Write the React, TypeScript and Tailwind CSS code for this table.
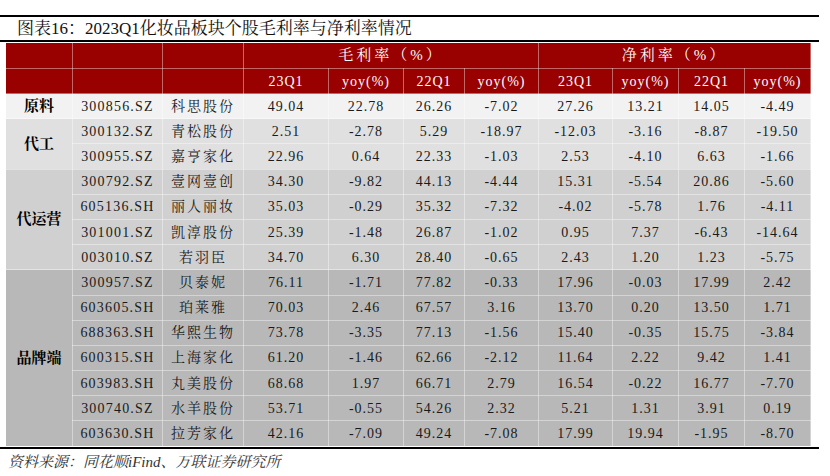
const serif = {
  fontFamily:
    '"Liberation Serif", "Noto Serif CJK SC", "Noto Sans CJK SC", serif',
};

type Row = { code: string; name: string; vals: string[] };

const groups: { label: string; bg: string; rows: Row[] }[] = [
  {
    label: "原料",
    bg: "bg-[#f2f2f2]",
    rows: [
      { code: "300856.SZ", name: "科思股份", vals: ["49.04", "22.78", "26.26", "-7.02", "27.26", "13.21", "14.05", "-4.49"] },
    ],
  },
  {
    label: "代工",
    bg: "bg-[#e0e0e0]",
    rows: [
      { code: "300132.SZ", name: "青松股份", vals: ["2.51", "-2.78", "5.29", "-18.97", "-12.03", "-3.16", "-8.87", "-19.50"] },
      { code: "300955.SZ", name: "嘉亨家化", vals: ["22.96", "0.64", "22.33", "-1.03", "2.53", "-4.10", "6.63", "-1.66"] },
    ],
  },
  {
    label: "代运营",
    bg: "bg-[#d0d0d0]",
    rows: [
      { code: "300792.SZ", name: "壹网壹创", vals: ["34.30", "-9.82", "44.13", "-4.44", "15.31", "-5.54", "20.86", "-5.60"] },
      { code: "605136.SH", name: "丽人丽妆", vals: ["35.03", "-0.29", "35.32", "-7.32", "-4.02", "-5.78", "1.76", "-4.11"] },
      { code: "301001.SZ", name: "凯淳股份", vals: ["25.39", "-1.48", "26.87", "-1.02", "0.95", "7.37", "-6.43", "-14.64"] },
      { code: "003010.SZ", name: "若羽臣", vals: ["34.70", "6.30", "28.40", "-0.65", "2.43", "1.20", "1.23", "-5.75"] },
    ],
  },
  {
    label: "品牌端",
    bg: "bg-[#b8b8b8]",
    rows: [
      { code: "300957.SZ", name: "贝泰妮", vals: ["76.11", "-1.71", "77.82", "-0.33", "17.96", "-0.03", "17.99", "2.42"] },
      { code: "603605.SH", name: "珀莱雅", vals: ["70.03", "2.46", "67.57", "3.16", "13.70", "0.20", "13.50", "1.71"] },
      { code: "688363.SH", name: "华熙生物", vals: ["73.78", "-3.35", "77.13", "-1.56", "15.40", "-0.35", "15.75", "-3.84"] },
      { code: "600315.SH", name: "上海家化", vals: ["61.20", "-1.46", "62.66", "-2.12", "11.64", "2.22", "9.42", "1.41"] },
      { code: "603983.SH", name: "丸美股份", vals: ["68.68", "1.97", "66.71", "2.79", "16.54", "-0.22", "16.77", "-7.70"] },
      { code: "300740.SZ", name: "水羊股份", vals: ["53.71", "-0.55", "54.26", "2.32", "5.21", "1.31", "3.91", "0.19"] },
      { code: "603630.SH", name: "拉芳家化", vals: ["42.16", "-7.09", "49.24", "-7.08", "17.99", "19.94", "-1.95", "-8.70"] },
    ],
  },
];

const widths = [67, 90, 81, 85, 75, 61, 74, 74, 66, 66, 66];
const subHeads = ["23Q1", "yoy(%)", "22Q1", "yoy(%)", "23Q1", "yoy(%)", "22Q1", "yoy(%)"];

const cell = "border border-white/40 text-center p-0";

export default function App() {
  return (
    <div className="bg-white w-[830px] h-[476px] pt-[15px]" style={serif}>
      <div className="w-[819px] border-t-2 border-black">
        <div className="h-[25px] border-b-2 border-black flex items-center pl-[17px] text-[17px] text-[#111] leading-none">
          图表16：2023Q1化妆品板块个股毛利率与净利率情况
        </div>
        <div className="pl-[5px] border-b-2 border-black">
          <table className="table-fixed border-collapse w-[805px] text-[#1a1a1a]">
            <colgroup>
              {widths.map((w, i) => (
                <col key={i} style={{ width: w }} />
              ))}
            </colgroup>
            <thead className="bg-[#990000] text-white font-normal">
              <tr className="h-[26px]">
                <th className={cell}></th>
                <th className={cell}></th>
                <th className={cell}></th>
                <th colSpan={4} className={`${cell} font-normal text-[15px] tracking-[3px]`}>
                  毛利率（%）
                </th>
                <th colSpan={4} className={`${cell} font-normal text-[15px] tracking-[3px]`}>
                  净利率（%）
                </th>
              </tr>
              <tr className="h-[25px]">
                <th className={cell}></th>
                <th className={cell}></th>
                <th className={cell}></th>
                {subHeads.map((h, i) => (
                  <th key={i} className={`${cell} font-normal text-[14px] tracking-[1px]`}>
                    {h}
                  </th>
                ))}
              </tr>
            </thead>
            <tbody>
              {groups.map((g) =>
                g.rows.map((r, ri) => (
                  <tr key={r.code} className={`h-[25.2px] ${g.bg}`}>
                    {ri === 0 && (
                      <td rowSpan={g.rows.length} className={`${cell} font-bold text-[15px] text-black`}>
                        {g.label}
                      </td>
                    )}
                    <td className={`${cell} text-[14px] tracking-[1.2px]`}>{r.code}</td>
                    <td className={`${cell} text-[14px] tracking-[2px]`}>{r.name}</td>
                    {r.vals.map((v, vi) => (
                      <td key={vi} className={`${cell} text-[14px] tracking-[1px]`}>
                        {v}
                      </td>
                    ))}
                  </tr>
                ))
              )}
            </tbody>
          </table>
        </div>
        <div className="pl-[8px] pt-[3px] text-[15px] italic text-[#333] leading-[20px]">
          资料来源：同花顺iFind、万联证券研究所
        </div>
      </div>
    </div>
  );
}
